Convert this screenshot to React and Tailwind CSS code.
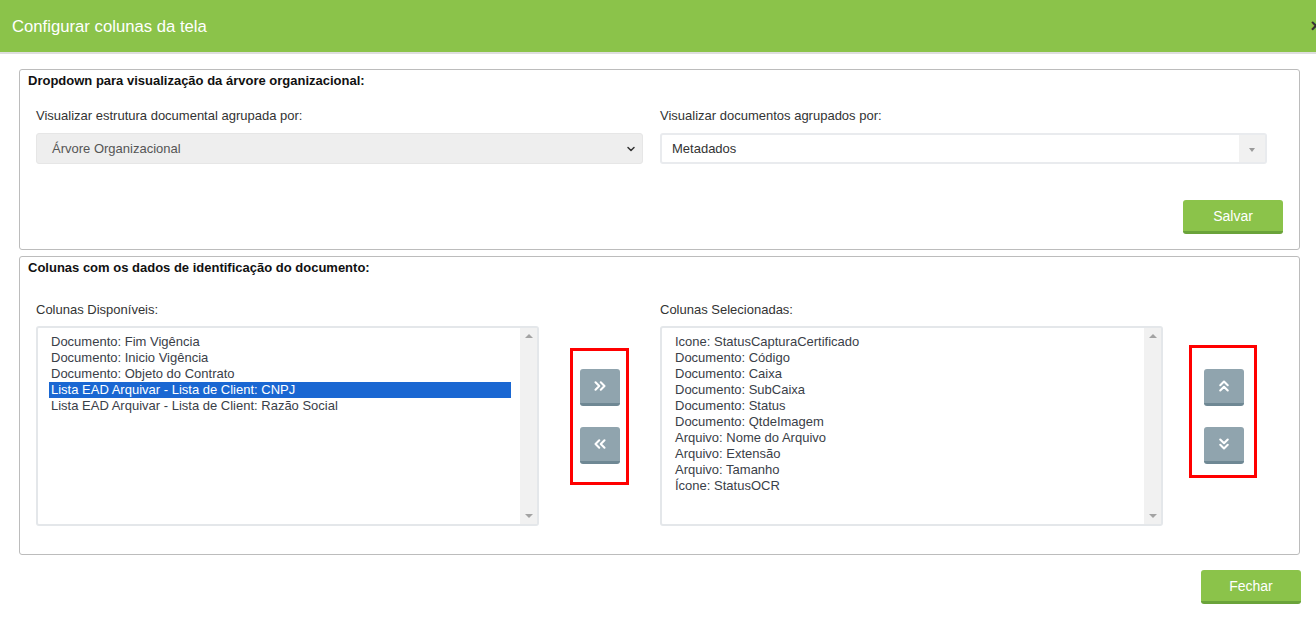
import { ChevronDown, ChevronsRight, ChevronsLeft, ChevronsUp, ChevronsDown } from 'lucide-react'

const available = [
  'Documento: Fim Vigência',
  'Documento: Inicio Vigência',
  'Documento: Objeto do Contrato',
  'Lista EAD Arquivar - Lista de Client: CNPJ',
  'Lista EAD Arquivar - Lista de Client: Razão Social',
]

const selected = [
  'Icone: StatusCapturaCertificado',
  'Documento: Código',
  'Documento: Caixa',
  'Documento: SubCaixa',
  'Documento: Status',
  'Documento: QtdeImagem',
  'Arquivo: Nome do Arquivo',
  'Arquivo: Extensão',
  'Arquivo: Tamanho',
  'Ícone: StatusOCR',
]

function ListBox({ items, active }) {
  return (
    <div className="flex h-[200px] w-[503px] rounded-[3px] border-2 border-[#e4e7ea] bg-white">
      <div className="flex-1 pl-[11px] pr-[9px] pt-[6px]">
        {items.map((item, i) => (
          <div
            key={item}
            className={
              i === active
                ? 'h-[16px] bg-[#1a67d2] pl-[2px] text-[13px] leading-[16px] text-white'
                : 'h-[16px] pl-[2px] text-[13px] leading-[16px] text-[#3a4048]'
            }
          >
            {item}
          </div>
        ))}
      </div>
      <div className="flex w-[17px] flex-col items-center justify-between bg-[#f1f1f1] py-[6px]">
        <span className="h-0 w-0 border-x-[4px] border-b-[4px] border-x-transparent border-b-[#a3a3a3]" />
        <span className="h-0 w-0 border-x-[4px] border-t-[4px] border-x-transparent border-t-[#a3a3a3]" />
      </div>
    </div>
  )
}

function GrayButton({ children }) {
  return (
    <div className="flex h-[37px] w-[40px] items-center justify-center rounded-[3px] border-b-[3px] border-[#6f8894] bg-[#90a4ae] text-white">
      {children}
    </div>
  )
}

function GreenButton({ label }) {
  return (
    <div className="flex h-[34px] w-[100px] items-center justify-center rounded-[3px] border-b-[3px] border-[#6aa33a] bg-[#8bc34a] pt-[2px] text-[14px] text-white">
      {label}
    </div>
  )
}

export default function App() {
  return (
    <div className="h-[617px] w-[1316px] overflow-hidden bg-white font-['Liberation_Sans',Arial,sans-serif] text-[#333]">
      <div className="flex h-[54px] items-center overflow-hidden border-b-2 border-[#dedede] bg-[#8bc34a] pl-[12px]">
        <span className="flex-1 pt-[1px] text-[16.7px] text-white">Configurar colunas da tela</span>
        <span className="mr-[-5px] text-[18px] font-bold text-[#333]">×</span>
      </div>

      <div className="ml-[19px] mt-[15px] h-[181px] w-[1281px] rounded-[3px] border border-[#bcbcbc]">
        <div className="pl-[8px] pt-[3px] text-[13px] font-bold leading-[16px] text-[#111]">
          Dropdown para visualização da árvore organizacional:
        </div>
        <div className="mt-[19px] flex gap-[17px] pl-[16px]">
          <div className="w-[607px]">
            <div className="text-[13px] leading-[16px] text-[#333]">Visualizar estrutura documental agrupada por:</div>
            <div className="mt-[9px] flex h-[31px] items-center justify-between rounded-[3px] border border-[#e6e6e6] bg-[#eeeeee] pl-[15px] pr-[5px]">
              <span className="text-[13px] text-[#555]">Árvore Organizacional</span>
              <ChevronDown size={12} strokeWidth={3} className="text-[#333]" />
            </div>
          </div>
          <div className="w-[607px]">
            <div className="text-[13px] leading-[16px] text-[#333]">Visualizar documentos agrupados por:</div>
            <div className="mt-[9px] flex h-[31px] items-stretch rounded-[3px] border-2 border-[#e9ebee] bg-white">
              <span className="flex flex-1 items-center pl-[10px] text-[13px] text-[#333]">Metadados</span>
              <span className="flex w-[26px] items-center justify-center bg-[#f1f1f1] pt-[2px]">
                <span className="h-0 w-0 border-x-[3px] border-t-[4px] border-x-transparent border-t-[#9a9a9a]" />
              </span>
            </div>
          </div>
        </div>
        <div className="mt-[36px] flex justify-end pr-[16px]">
          <GreenButton label="Salvar" />
        </div>
      </div>

      <div className="ml-[19px] mt-[6px] h-[299px] w-[1281px] rounded-[3px] border border-[#bcbcbc]">
        <div className="pl-[8px] pt-[3px] text-[13px] font-bold leading-[16px] text-[#111]">
          Colunas com os dados de identificação do documento:
        </div>
        <div className="mt-[26px] flex items-start pl-[16px]">
          <div>
            <div className="text-[13px] leading-[16px] text-[#333]">Colunas Disponíveis:</div>
            <div className="mt-[8px]">
              <ListBox items={available} active={3} />
            </div>
          </div>
          <div className="ml-[31px] mt-[46px] flex h-[137px] w-[59px] flex-col gap-[21px] border-[3px] border-[#ff0000] pl-[7px] pt-[18px]">
            <GrayButton>
              <ChevronsRight size={18} strokeWidth={2.8} />
            </GrayButton>
            <GrayButton>
              <ChevronsLeft size={18} strokeWidth={2.8} />
            </GrayButton>
          </div>
          <div className="ml-[31px]">
            <div className="text-[13px] leading-[16px] text-[#333]">Colunas Selecionadas:</div>
            <div className="mt-[8px]">
              <ListBox items={selected} active={-1} />
            </div>
          </div>
          <div className="ml-[26px] mt-[43px] flex h-[133px] w-[68px] flex-col gap-[21px] border-[3px] border-[#ff0000] pl-[12px] pt-[21px]">
            <GrayButton>
              <ChevronsUp size={18} strokeWidth={2.8} />
            </GrayButton>
            <GrayButton>
              <ChevronsDown size={18} strokeWidth={2.8} />
            </GrayButton>
          </div>
        </div>
      </div>

      <div className="mt-[15px] flex justify-end pr-[15px]">
        <GreenButton label="Fechar" />
      </div>
    </div>
  )
}
